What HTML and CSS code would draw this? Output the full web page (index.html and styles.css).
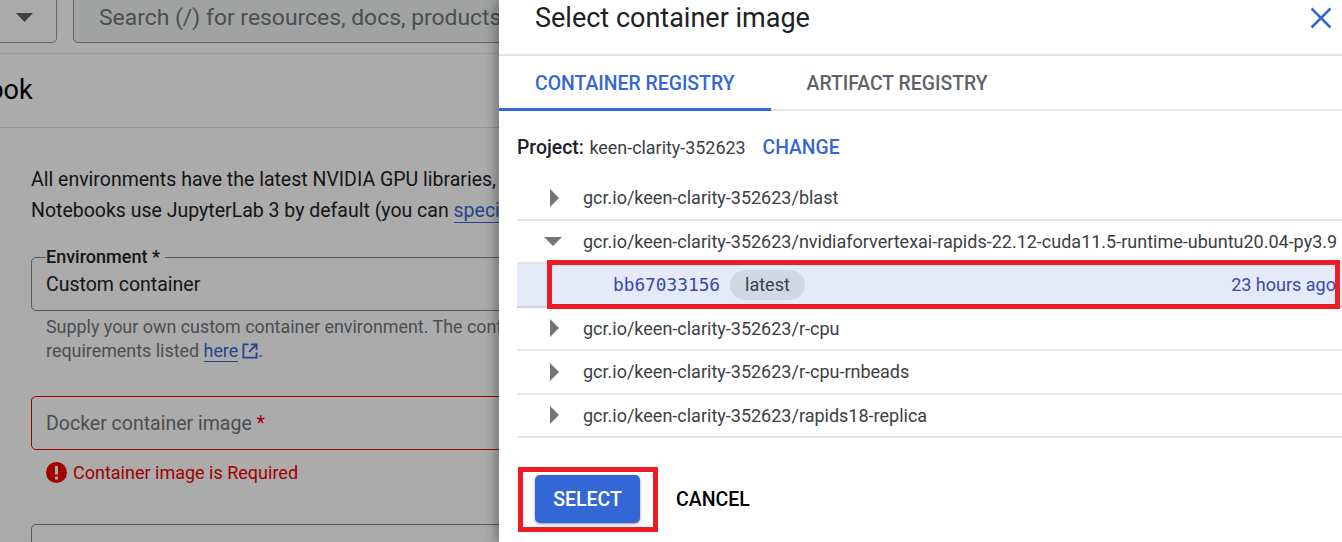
FILE: index.html
```html
<!DOCTYPE html>
<html>
<head>
    <title>Select container image</title>
    <meta name="viewport" content="width=device-width, initial-scale=1.0">
    <link rel="stylesheet" href="styles.css">
</head>
<body>
    <div class="page">
        <div class="topbar">
            <div class="picker">
                <svg class="picker-caret" width="17" height="9" viewBox="0 0 17 9"><path d="M0 0h17L8.500 9z"/></svg>
            </div>
            <div class="search">Search (/) for resources, docs, products</div>
        </div>
        <div class="titlebar"><h1>New notebook</h1></div>
        <div class="content">
            <p class="intro">All environments have the latest NVIDIA GPU libraries,<br>Notebooks use JupyterLab 3 by default (you can <a href="#">specify</a></p>
            <fieldset class="field">
                <legend>Environment *</legend>
                <div class="field-value">Custom container</div>
            </fieldset>
            <p class="help">Supply your own custom container environment. The container<br>requirements listed <a href="#">here</a><svg class="ext" width="16" height="16" viewBox="0 0 17 17"><path d="M7 1.500H1.500v14h14V10M9.500 1.500h6v6M15 2L7.500 9.500" fill="none" stroke="currentColor" stroke-width="2"/></svg>.</p>
            <div class="input-error">Docker container image <span class="req">*</span></div>
            <div class="error-msg">
                <svg width="21" height="21" viewBox="0 0 21 21"><circle cx="10.500" cy="10.500" r="10.500" fill="#f00000"/><path d="M9 4h3v8.500H9zM9 14.500h3v3H9z" fill="#fff"/></svg>
                <span>Container image is Required</span>
            </div>
            <div class="field-next"></div>
        </div>
        <div class="scrim"></div>
    </div>

    <div class="drawer">
        <div class="drawer-head">
            <h2>Select container image</h2>
            <svg class="close" width="22" height="22" viewBox="0 0 22 22"><path d="M1.500 1.500l19 19M20.500 1.500l-19 19" fill="none" stroke="#3367d6" stroke-width="2.500"/></svg>
        </div>
        <div class="tabs">
            <div class="tab active">CONTAINER REGISTRY</div>
            <div class="tab">ARTIFACT REGISTRY</div>
        </div>
        <div class="project">
            <b>Project:</b>
            <span class="project-id">keen-clarity-352623</span>
            <span class="change">CHANGE</span>
        </div>
        <div class="tree">
            <div class="row"><span class="arrow-right"></span><span class="path">gcr.io/keen-clarity-352623/blast</span></div>
            <div class="row"><span class="arrow-down"></span><span class="path">gcr.io/keen-clarity-352623/nvidiaforvertexai-rapids-22.12-cuda11.5-runtime-ubuntu20.04-py3.9</span></div>
            <div class="row selected">
                <span class="hash">bb67033156</span>
                <span class="chip">latest</span>
                <span class="age">23 hours ago</span>
            </div>
            <div class="row"><span class="arrow-right"></span><span class="path">gcr.io/keen-clarity-352623/r-cpu</span></div>
            <div class="row"><span class="arrow-right"></span><span class="path">gcr.io/keen-clarity-352623/r-cpu-rnbeads</span></div>
            <div class="row"><span class="arrow-right"></span><span class="path">gcr.io/keen-clarity-352623/rapids18-replica</span></div>
        </div>
        <div class="actions">
            <button class="btn-select">SELECT</button>
            <button class="btn-cancel">CANCEL</button>
        </div>
    </div>

    <!-- red annotation boxes drawn on top of the shot -->
    <div class="mark mark-row"></div>
    <div class="mark mark-btn"></div>
</body>
</html>
```

FILE: styles.css
```css
html, body { margin: 0; height: 100%; }
body { display: flex; height: 542px; overflow: hidden; font-family: Roboto, "Liberation Sans", sans-serif; background: #fff; color: #202124; position: relative; }
a { color: #3367d6; text-decoration: none; border-bottom: 1px solid #3367d6; }

/* page behind the drawer */
.page { flex: 0 0 499px; width: 499px; overflow: hidden; position: relative; }
.scrim { position: absolute; inset: 0; background: rgba(0, 0, 0, 0.33); }
.topbar { height: 53px; border-bottom: 1px solid #e8e8e8; display: flex; gap: 16px; }
.picker { flex: 0 0 57px; height: 60px; margin-top: -17px; box-sizing: border-box; border: 1px solid #999; border-left: 0; border-radius: 0 0 5px 0; display: flex; align-items: center; justify-content: flex-end; padding: 8px 23px 0 0; }
.picker-caret { fill: #5f6368; }
.search { flex: 0 0 600px; height: 60px; margin-top: -17px; box-sizing: border-box; border: 1px solid #999; border-radius: 0 0 5px 5px; background: #f1f3f4; color: #70757a; font-size: 22.900px; padding: 17px 0 0 25px; line-height: 34px; white-space: nowrap; }
.titlebar { height: 73px; border-bottom: 1px solid #e0e0e0; display: flex; align-items: center; }
.titlebar h1 { margin: 0 0 2px -141px; font-size: 27px; font-weight: 400; color: #000; white-space: nowrap; }
.content { padding: 37px 0 0 31px; width: 640px; }
.intro { margin: 0; font-size: 19.500px; line-height: 30.500px; white-space: nowrap; color: #202124; }
.field { margin: 21px 0 0; padding: 0 14px; height: 64px; box-sizing: border-box; border: 1px solid #80868b; border-radius: 5px; }
.field legend { padding: 0 5px 0 0; font-size: 18px; font-weight: 500; line-height: 20px; color: #202124; }
.field-value { font-size: 19.500px; line-height: 24px; margin-top: 6px; color: #202124; }
.help { margin: 4px 0 0 15px; font-size: 17.900px; line-height: 24px; color: #70757a; white-space: nowrap; }
.ext { color: #3367d6; vertical-align: -2px; margin-left: 4px; }
.input-error { margin-top: 33px; height: 54px; box-sizing: border-box; border: 1px solid #f00000; border-radius: 5px; padding: 0 14px; font-size: 19.500px; line-height: 54px; color: #70757a; }
.req { color: #f00000; }
.error-msg { display: flex; align-items: center; gap: 6px; margin: 12px 0 0 15px; font-size: 18px; color: #f00000; }
.field-next { margin-top: 41px; height: 60px; border: 1px solid #80868b; border-radius: 5px; }

/* drawer */
.drawer { flex: 1; min-width: 0; background: #fff; box-shadow: -4px 0 10px rgba(0, 0, 0, 0.3); z-index: 1; }
.drawer-head { height: 54px; border-bottom: 2px solid #e6e6e6; display: flex; justify-content: space-between; padding: 0 10px 0 36px; }
.drawer-head h2 { margin: 0; font-size: 27px; font-weight: 400; line-height: 36px; color: #202124; }
.close { margin-top: 7px; }
.tabs { height: 53px; border-bottom: 2px solid #e6e6e6; display: flex; }
.tab { padding: 0 36px; height: 55px; box-sizing: border-box; line-height: 55px; font-size: 19.400px; font-weight: 500; color: #5f6368; }
.tab.active { color: #3367d6; border-bottom: 3px solid #3367d6; }
.project { display: flex; align-items: center; height: 32px; margin: 20px 0 0 18px; color: #202124; }
.project b { font-weight: 500; margin-right: 5.500px; font-size: 19.400px; }
.project-id { font-size: 17.900px; color: #3c4043; }
.change { margin-left: 17px; font-size: 19.300px; font-weight: 500; color: #3367d6; }
.tree { margin: 14px 0 0 18px; }
.row { display: flex; align-items: center; height: 43.500px; box-sizing: border-box; border-bottom: 2px solid #e6e6e6; font-size: 18px; color: #3c4043; white-space: nowrap; }
.path { margin-left: 24px; }
.arrow-right { margin-left: 33px; width: 0; height: 0; border-left: 9px solid #757575; border-top: 9px solid transparent; border-bottom: 9px solid transparent; }
.arrow-down { margin-left: 27px; width: 0; height: 0; border-top: 9px solid #757575; border-left: 9px solid transparent; border-right: 9px solid transparent; }
.row .arrow-down + .path { margin-left: 21px; }
.selected { background: #e4eaf7; border-bottom-color: #ccd3e0; }
.hash { margin-left: 96px; font-family: "DejaVu Sans Mono", monospace; font-size: 17.800px; color: #3949ab; }
.chip { margin-left: 10px; height: 30px; line-height: 30px; padding: 0 15px; border-radius: 15px; background: #d0d8e6; color: #3c4043; }
.age { margin-left: auto; margin-right: 6px; color: #3949ab; }
.actions { display: flex; align-items: center; gap: 18px; margin: 37px 0 0 36px; }
.btn-select { width: 105px; height: 48px; border: 0; padding: 0; border-radius: 5px; background: #3367d6; color: #fff; font: 500 19.500px Roboto, sans-serif; box-shadow: 0 1px 3px rgba(0, 0, 0, 0.4); }
.btn-cancel { border: 0; background: none; padding: 10px 18px; font: 500 19.500px Roboto, sans-serif; color: #000; }

/* annotation */
.mark { position: absolute; z-index: 2; border: 5px solid #ee1c25; box-sizing: border-box; }
.mark-row { left: 547px; top: 260px; width: 793px; height: 49px; }
.mark-btn { left: 518px; top: 467px; width: 140px; height: 65px; }
```
